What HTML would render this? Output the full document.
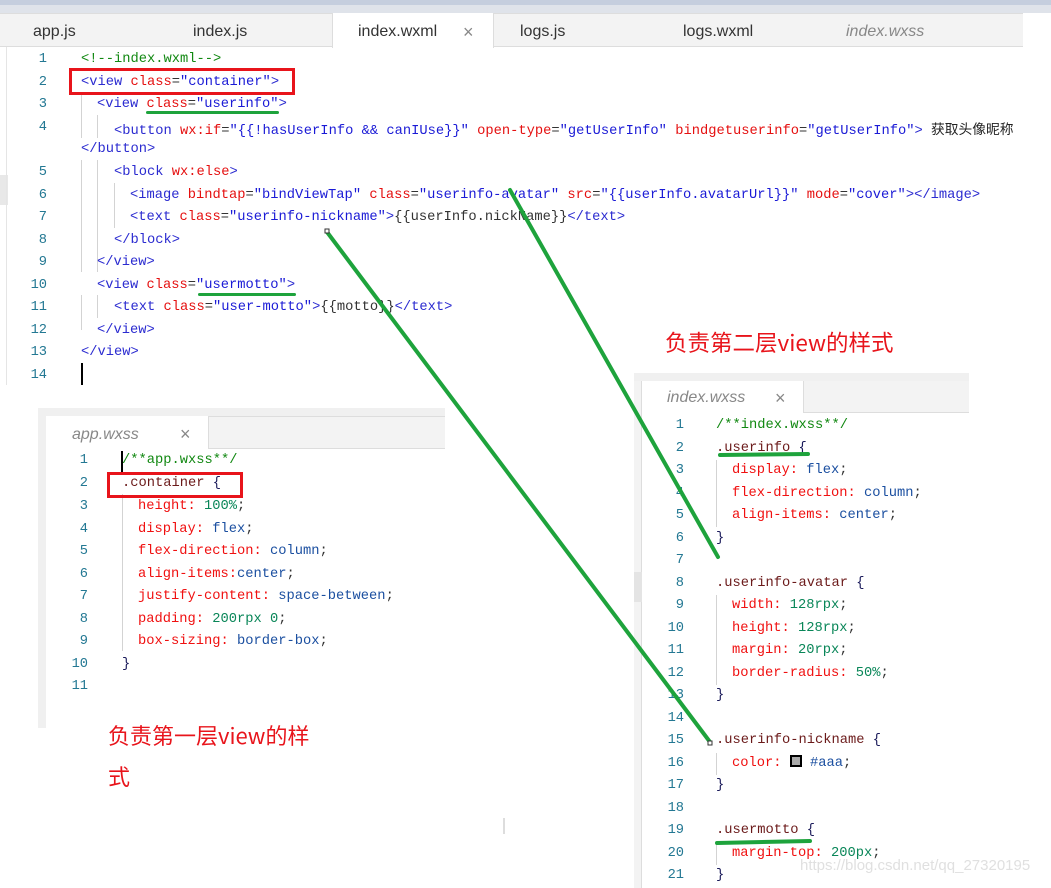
<!DOCTYPE html>
<html><head><meta charset="utf-8"><style>
*{margin:0;padding:0;box-sizing:border-box}
body{width:1051px;height:888px;background:#fff;position:relative;overflow:hidden;font-family:"Liberation Sans","Noto Sans CJK SC",sans-serif}
.abs{position:absolute}
.code{position:absolute;font-family:"Liberation Mono",monospace;font-size:13.75px;white-space:pre;line-height:22px;margin-top:2px}
.ln{position:absolute;font-family:"Liberation Mono",monospace;font-size:13.7px;color:#237893;text-align:right;width:30px;line-height:22px;margin-top:2px}
.tab{position:absolute;font-size:16px;color:#333;line-height:34px;margin-top:2px}
.t{color:#2b2bd0}.a{color:#e51010}.s{color:#1a1ad6}.c{color:#118811}.n{color:#333}
.sel{color:#6b1a1a}.p{color:#f01010}.v{color:#1b4fa0}.num{color:#098658}.b{color:#1a1a5a}
.guide{position:absolute;width:1px;background:#d3d3d3}
</style></head><body>
<!-- top strip -->
<div class="abs" style="left:0;top:0;width:1051px;height:5px;background:#c5cede"></div>
<div class="abs" style="left:0;top:5px;width:1051px;height:8px;background:#dfe3ea"></div>
<div class="abs" style="left:0;top:13px;width:1023px;height:34px;background:#f3f3f3;border-top:1px solid #ddd;border-bottom:1px solid #ddd"></div>
<div class="abs" style="left:1023px;top:13px;width:28px;height:380px;background:#fff"></div>
<div class="abs" style="left:332px;top:13px;width:162px;height:35px;background:#fff;border-left:1px solid #ddd;border-right:1px solid #ddd"></div>
<div class="tab" style="left:33px;top:13px">app.js</div>
<div class="tab" style="left:193px;top:13px">index.js</div>
<div class="tab" style="left:358px;top:13px">index.wxml</div>
<div class="tab" style="left:463px;top:13px;color:#888;font-size:18px">×</div>
<div class="tab" style="left:520px;top:13px">logs.js</div>
<div class="tab" style="left:683px;top:13px">logs.wxml</div>
<div class="tab" style="left:846px;top:13px;color:#888;font-style:italic">index.wxss</div>
<div class="abs" style="left:0;top:175px;width:8px;height:30px;background:#e8e8e8"></div>
<div class="abs" style="left:6px;top:47px;width:1px;height:338px;background:#e5e5e5"></div>

<!-- main code -->
<div class="ln" style="left:17px;top:47px">1</div>
<div class="ln" style="left:17px;top:70px">2</div>
<div class="ln" style="left:17px;top:92px">3</div>
<div class="ln" style="left:17px;top:115px">4</div>
<div class="ln" style="left:17px;top:160px">5</div>
<div class="ln" style="left:17px;top:183px">6</div>
<div class="ln" style="left:17px;top:205px">7</div>
<div class="ln" style="left:17px;top:228px">8</div>
<div class="ln" style="left:17px;top:250px">9</div>
<div class="ln" style="left:17px;top:273px">10</div>
<div class="ln" style="left:17px;top:295px">11</div>
<div class="ln" style="left:17px;top:318px">12</div>
<div class="ln" style="left:17px;top:340px">13</div>
<div class="ln" style="left:17px;top:363px">14</div>
<div class="guide" style="left:81px;top:93px;height:45px"></div>
<div class="guide" style="left:97px;top:115px;height:23px"></div>
<div class="guide" style="left:81px;top:160px;height:112px"></div>
<div class="guide" style="left:97px;top:160px;height:112px"></div>
<div class="guide" style="left:114px;top:183px;height:45px"></div>
<div class="guide" style="left:81px;top:295px;height:35px"></div>
<div class="guide" style="left:97px;top:295px;height:23px"></div>
<div class="code" style="left:81px;top:47px"><span class="c">&lt;!--index.wxml--&gt;</span></div>
<div class="code" style="left:81px;top:70px"><span class="t">&lt;view </span><span class="a">class</span><span class="n">=</span><span class="s">"container"</span><span class="t">&gt;</span></div>
<div class="code" style="left:97px;top:92px"><span class="t">&lt;view </span><span class="a">class</span><span class="n">=</span><span class="s">"userinfo"</span><span class="t">&gt;</span></div>
<div class="code" style="left:114px;top:115px"><span class="t">&lt;button </span><span class="a">wx:if</span><span class="n">=</span><span class="s">"{{!hasUserInfo &amp;&amp; canIUse}}"</span> <span class="a">open-type</span><span class="n">=</span><span class="s">"getUserInfo"</span> <span class="a">bindgetuserinfo</span><span class="n">=</span><span class="s">"getUserInfo"</span><span class="t">&gt;</span> <span style="font-family:'Noto Sans CJK SC',sans-serif;color:#222">获取头像昵称</span></div>
<div class="code" style="left:81px;top:137px"><span class="t">&lt;/button&gt;</span></div>
<div class="code" style="left:114px;top:160px"><span class="t">&lt;block </span><span class="a">wx:else</span><span class="t">&gt;</span></div>
<div class="code" style="left:130px;top:183px"><span class="t">&lt;image </span><span class="a">bindtap</span><span class="n">=</span><span class="s">"bindViewTap"</span> <span class="a">class</span><span class="n">=</span><span class="s">"userinfo-avatar"</span> <span class="a">src</span><span class="n">=</span><span class="s">"{{userInfo.avatarUrl}}"</span> <span class="a">mode</span><span class="n">=</span><span class="s">"cover"</span><span class="t">&gt;&lt;/image&gt;</span></div>
<div class="code" style="left:130px;top:205px"><span class="t">&lt;text </span><span class="a">class</span><span class="n">=</span><span class="s">"userinfo-nickname"</span><span class="t">&gt;</span><span class="n">{{userInfo.nickName}}</span><span class="t">&lt;/text&gt;</span></div>
<div class="code" style="left:114px;top:228px"><span class="t">&lt;/block&gt;</span></div>
<div class="code" style="left:97px;top:250px"><span class="t">&lt;/view&gt;</span></div>
<div class="code" style="left:97px;top:273px"><span class="t">&lt;view </span><span class="a">class</span><span class="n">=</span><span class="s">"usermotto"</span><span class="t">&gt;</span></div>
<div class="code" style="left:114px;top:295px"><span class="t">&lt;text </span><span class="a">class</span><span class="n">=</span><span class="s">"user-motto"</span><span class="t">&gt;</span><span class="n">{{motto}}</span><span class="t">&lt;/text&gt;</span></div>
<div class="code" style="left:97px;top:318px"><span class="t">&lt;/view&gt;</span></div>
<div class="code" style="left:81px;top:340px"><span class="t">&lt;/view&gt;</span></div>
<div class="abs" style="left:81px;top:363px;width:2px;height:22px;background:#000"></div>
<div class="abs" style="left:69px;top:68px;width:226px;height:27px;border:3px solid #e8141b"></div>
<div class="abs" style="left:146px;top:111px;width:133px;height:3px;background:#1ea33c;border-radius:2px"></div>
<div class="abs" style="left:198px;top:293px;width:98px;height:3px;background:#1ea33c;border-radius:2px"></div>

<!-- app.wxss panel -->
<div class="abs" style="left:38px;top:408px;width:407px;height:320px;background:#fff;border-left:1px solid #e0e0e0"></div>
<div class="abs" style="left:38px;top:408px;width:407px;height:8px;background:#f0f0f0"></div>
<div class="abs" style="left:38px;top:416px;width:8px;height:312px;background:#f0f0f0"></div>
<div class="abs" style="left:46px;top:416px;width:399px;height:33px;background:#f3f3f3;border-top:1px solid #ddd;border-bottom:1px solid #ddd"></div>
<div class="abs" style="left:46px;top:416px;width:163px;height:33px;background:#fff;border-right:1px solid #ddd"></div>
<div class="tab" style="left:72px;top:416px;color:#888;font-style:italic;line-height:33px">app.wxss</div>
<div class="tab" style="left:180px;top:416px;color:#888;font-size:18px;line-height:33px">×</div>
<div class="ln" style="left:58px;top:448px">1</div>
<div class="ln" style="left:58px;top:471px">2</div>
<div class="ln" style="left:58px;top:494px">3</div>
<div class="ln" style="left:58px;top:517px">4</div>
<div class="ln" style="left:58px;top:539px">5</div>
<div class="ln" style="left:58px;top:562px">6</div>
<div class="ln" style="left:58px;top:584px">7</div>
<div class="ln" style="left:58px;top:607px">8</div>
<div class="ln" style="left:58px;top:629px">9</div>
<div class="ln" style="left:58px;top:652px">10</div>
<div class="ln" style="left:58px;top:674px">11</div>
<div class="guide" style="left:122px;top:494px;height:157px"></div>
<div class="abs" style="left:121px;top:451px;width:2px;height:22px;background:#000"></div>
<div class="code" style="left:122px;top:448px"><span class="c">/**app.wxss**/</span></div>
<div class="code" style="left:122px;top:471px"><span class="sel">.container </span><span class="b">{</span></div>
<div class="code" style="left:138px;top:494px"><span class="p">height: </span><span class="num">100%</span><span class="n">;</span></div>
<div class="code" style="left:138px;top:517px"><span class="p">display: </span><span class="v">flex</span><span class="n">;</span></div>
<div class="code" style="left:138px;top:539px"><span class="p">flex-direction: </span><span class="v">column</span><span class="n">;</span></div>
<div class="code" style="left:138px;top:562px"><span class="p">align-items:</span><span class="v">center</span><span class="n">;</span></div>
<div class="code" style="left:138px;top:584px"><span class="p">justify-content: </span><span class="v">space-between</span><span class="n">;</span></div>
<div class="code" style="left:138px;top:607px"><span class="p">padding: </span><span class="num">200rpx 0</span><span class="n">;</span></div>
<div class="code" style="left:138px;top:629px"><span class="p">box-sizing: </span><span class="v">border-box</span><span class="n">;</span></div>
<div class="code" style="left:122px;top:652px"><span class="b">}</span></div>
<div class="abs" style="left:107px;top:472px;width:136px;height:26px;border:3px solid #e8141b"></div>
<div class="abs" style="left:108px;top:715px;font-size:22px;color:#e8141b;line-height:41px;width:240px;font-family:'Noto Sans CJK SC',sans-serif">负责第一层view的样<br>式</div>
<div class="abs" style="left:503px;top:818px;width:2px;height:16px;background:#ddd"></div>

<!-- index.wxss panel -->
<div class="abs" style="left:665px;top:326px;font-size:22.5px;color:#e8141b;font-family:'Noto Sans CJK SC',sans-serif">负责第二层view的样式</div>
<div class="abs" style="left:634px;top:373px;width:335px;height:515px;background:#fff"></div>
<div class="abs" style="left:634px;top:373px;width:335px;height:8px;background:#f0f0f0"></div>
<div class="abs" style="left:634px;top:381px;width:8px;height:507px;background:#f3f3f3;border-right:1px solid #ddd"></div>
<div class="abs" style="left:634px;top:572px;width:8px;height:30px;background:#e4e4e4"></div>
<div class="abs" style="left:642px;top:381px;width:327px;height:32px;background:#f3f3f3;border-bottom:1px solid #ddd"></div>
<div class="abs" style="left:642px;top:381px;width:162px;height:32px;background:#fff;border-right:1px solid #ddd"></div>
<div class="tab" style="left:667px;top:380px;color:#888;font-style:italic;line-height:32px">index.wxss</div>
<div class="tab" style="left:775px;top:380px;color:#888;font-size:18px;line-height:32px">×</div>
<div class="ln" style="left:654px;top:413px">1</div>
<div class="ln" style="left:654px;top:436px">2</div>
<div class="ln" style="left:654px;top:458px">3</div>
<div class="ln" style="left:654px;top:481px">4</div>
<div class="ln" style="left:654px;top:503px">5</div>
<div class="ln" style="left:654px;top:526px">6</div>
<div class="ln" style="left:654px;top:548px">7</div>
<div class="ln" style="left:654px;top:571px">8</div>
<div class="ln" style="left:654px;top:593px">9</div>
<div class="ln" style="left:654px;top:616px">10</div>
<div class="ln" style="left:654px;top:638px">11</div>
<div class="ln" style="left:654px;top:661px">12</div>
<div class="ln" style="left:654px;top:683px">13</div>
<div class="ln" style="left:654px;top:706px">14</div>
<div class="ln" style="left:654px;top:728px">15</div>
<div class="ln" style="left:654px;top:751px">16</div>
<div class="ln" style="left:654px;top:773px">17</div>
<div class="ln" style="left:654px;top:796px">18</div>
<div class="ln" style="left:654px;top:818px">19</div>
<div class="ln" style="left:654px;top:841px">20</div>
<div class="ln" style="left:654px;top:863px">21</div>
<div class="guide" style="left:716px;top:460px;height:67px"></div>
<div class="guide" style="left:716px;top:595px;height:90px"></div>
<div class="guide" style="left:716px;top:753px;height:22px"></div>
<div class="guide" style="left:716px;top:843px;height:22px"></div>
<div class="code" style="left:716px;top:413px"><span class="c">/**index.wxss**/</span></div>
<div class="code" style="left:716px;top:436px"><span class="sel">.userinfo </span><span class="b">{</span></div>
<div class="code" style="left:732px;top:458px"><span class="p">display: </span><span class="v">flex</span><span class="n">;</span></div>
<div class="code" style="left:732px;top:481px"><span class="p">flex-direction: </span><span class="v">column</span><span class="n">;</span></div>
<div class="code" style="left:732px;top:503px"><span class="p">align-items: </span><span class="v">center</span><span class="n">;</span></div>
<div class="code" style="left:716px;top:526px"><span class="b">}</span></div>
<div class="code" style="left:716px;top:571px"><span class="sel">.userinfo-avatar </span><span class="b">{</span></div>
<div class="code" style="left:732px;top:593px"><span class="p">width: </span><span class="num">128rpx</span><span class="n">;</span></div>
<div class="code" style="left:732px;top:616px"><span class="p">height: </span><span class="num">128rpx</span><span class="n">;</span></div>
<div class="code" style="left:732px;top:638px"><span class="p">margin: </span><span class="num">20rpx</span><span class="n">;</span></div>
<div class="code" style="left:732px;top:661px"><span class="p">border-radius: </span><span class="num">50%</span><span class="n">;</span></div>
<div class="code" style="left:716px;top:683px"><span class="b">}</span></div>
<div class="code" style="left:716px;top:728px"><span class="sel">.userinfo-nickname </span><span class="b">{</span></div>
<div class="code" style="left:732px;top:751px"><span class="p">color: </span><span style="display:inline-block;width:12px;height:12px;background:#aaa;border:2px solid #000;vertical-align:-1px"></span><span class="v"> #aaa</span><span class="n">;</span></div>
<div class="code" style="left:716px;top:773px"><span class="b">}</span></div>
<div class="code" style="left:716px;top:818px"><span class="sel">.usermotto </span><span class="b">{</span></div>
<div class="code" style="left:732px;top:841px"><span class="p">margin-top: </span><span class="num">200px</span><span class="n">;</span></div>
<div class="code" style="left:716px;top:863px"><span class="b">}</span></div>
<div class="abs" style="left:800px;top:857px;font-size:15px;color:#e0e0e0">https://blog.csdn.net/qq_27320195</div>

<!-- green annotations -->
<svg class="abs" style="left:0;top:0" width="1051" height="888">
<g stroke="#1ea33c" stroke-width="4" stroke-linecap="round" fill="none">
<line x1="327" y1="232" x2="710" y2="742"/>
<line x1="510" y1="190" x2="718" y2="557"/>
<line x1="720" y1="455" x2="808" y2="454"/>
<line x1="717" y1="843" x2="810" y2="841"/>
</g>
<rect x="325" y="229" width="4" height="4" fill="#fff" stroke="#333" stroke-width="1"/>
<rect x="708" y="741" width="4" height="4" fill="#fff" stroke="#333" stroke-width="1"/>
</svg>
</body></html>
